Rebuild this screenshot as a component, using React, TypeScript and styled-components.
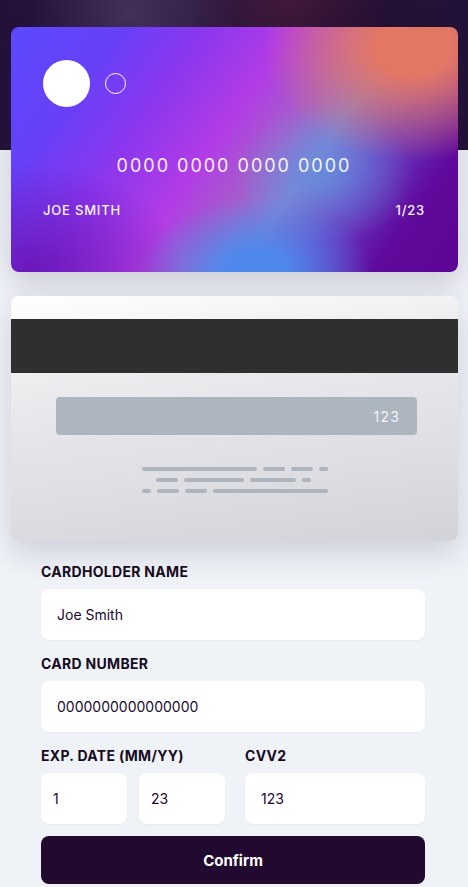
import styled, { createGlobalStyle } from "styled-components";

const GlobalStyle = createGlobalStyle`
  * { box-sizing: border-box; }
  html, body { margin: 0; padding: 0; }
  body {
    font-family: Inter, "Noto Sans", sans-serif;
    background: #eff2f7;
    color: #21092f;
  }
`;

const Page = styled.div`
  min-height: 887px;
  padding: 27px 10px 0 11px;
  background:
    radial-gradient(circle at 28% 10%, rgba(90, 70, 110, 0.55), transparent 28%),
    radial-gradient(circle at 62% 0%, rgba(90, 30, 60, 0.5), transparent 30%),
    linear-gradient(90deg, #24113a 0%, #2c1a40 40%, #251033 70%, #231238 100%),
    #eff2f7;
  background-size: 100% 150px, 100% 150px, 100% 150px, auto;
  background-repeat: no-repeat;
`;

const Cards = styled.div`
  display: flex;
  flex-direction: column;
  gap: 24px;
`;

const FrontCard = styled.div`
  height: 245px;
  border-radius: 8px;
  padding: 33px 33px 0 32px;
  color: #fff;
  display: flex;
  flex-direction: column;
  box-shadow: 0 12px 30px rgba(40, 30, 60, 0.18);
  background:
    radial-gradient(ellipse 150px 115px at 90% 8%, rgba(228, 118, 100, 1) 25%, rgba(228, 118, 100, 0) 100%),
    radial-gradient(ellipse 115px 75px at 55% 100%, rgba(78, 136, 236, 1) 25%, rgba(78, 136, 236, 0) 100%),
    radial-gradient(ellipse 90px 70px at 70% 60%, rgba(98, 146, 222, 0.8), rgba(98, 146, 222, 0) 100%),
    radial-gradient(ellipse 150px 110px at 5% 100%, rgba(100, 18, 178, 0.85), rgba(100, 18, 178, 0) 100%),
    linear-gradient(125deg, #5c49fd 0%, #6740f7 18%, #8c37ee 32%, #b23ce6 46%, #a65ccb 56%, #8480d2 64%, #6b3ec4 74%, #5f0a9c 86%, #5c0494 100%);
`;

const Logo = styled.div`
  display: flex;
  align-items: center;
  gap: 15px;
`;

const Dot = styled.span<{ $size: number; $filled?: boolean }>`
  width: ${(p) => p.$size}px;
  height: ${(p) => p.$size}px;
  border-radius: 50%;
  background: ${(p) => (p.$filled ? "#fff" : "transparent")};
  border: ${(p) => (p.$filled ? "none" : "1px solid #fff")};
`;

const CardNumber = styled.div`
  margin-top: 48px;
  text-align: center;
  font-size: 18px;
  letter-spacing: 2px;
  opacity: 0.92;
`;

const CardFooter = styled.div`
  margin-top: 26px;
  display: flex;
  justify-content: space-between;
  font-size: 13px;
  font-weight: 500;
  letter-spacing: 0.8px;
  opacity: 0.95;
`;

const BackCard = styled.div`
  height: 245px;
  border-radius: 8px;
  padding-top: 23px;
  overflow: hidden;
  box-shadow: 0 12px 30px rgba(40, 30, 60, 0.16);
  background: linear-gradient(172deg, #ffffff 0%, #ececef 30%, #dfdfe4 65%, #d2d3d8 100%);
`;

const Stripe = styled.div`
  height: 54px;
  background: #2f2f2f;
`;

const CvcBox = styled.div`
  margin: 24px 41px 0 45px;
  height: 38px;
  border-radius: 4px;
  background: #adb5bf;
  display: flex;
  align-items: center;
  justify-content: flex-end;
  padding-right: 17px;
  color: #f3f4f7;
  font-size: 14px;
  letter-spacing: 1.2px;
`;

const Dashes = styled.svg`
  display: block;
  margin: 32px auto 0;
`;

const Form = styled.form`
  width: 384px;
  margin: 21px 0 0 30px;
  display: flex;
  flex-direction: column;
`;

const Field = styled.div`
  display: flex;
  flex-direction: column;
  margin-bottom: 14px;
`;

const Label = styled.label`
  font-size: 14px;
  font-weight: 700;
  line-height: 20px;
  letter-spacing: 0.3px;
  text-transform: uppercase;
  color: #160b1f;
  margin-bottom: 7px;
  white-space: nowrap;
`;

const Input = styled.input<{ $pad?: number }>`
  height: 51px;
  width: 100%;
  border: none;
  border-radius: 8px;
  background: #fff;
  padding: 0 ${(p) => p.$pad ?? 16}px;
  font-family: Inter, "Noto Sans", sans-serif;
  font-size: 14px;
  color: #21092f;
  outline: none;
  box-shadow: 0 1px 2px rgba(30, 20, 50, 0.04);
`;

const Row = styled.div`
  display: grid;
  grid-template-columns: 184px 180px;
  column-gap: 20px;
`;

const Pair = styled.div`
  display: grid;
  grid-template-columns: 86px 86px;
  column-gap: 12px;
`;

const Button = styled.button`
  height: 48px;
  margin-top: -2px;
  border: none;
  border-radius: 8px;
  background: #21092f;
  color: #fff;
  font-family: Inter, "Noto Sans", sans-serif;
  font-size: 15px;
  font-weight: 700;
`;

const dashes: [number, number, number][] = [
  [143, 258, 470], [264, 286, 470], [292, 314, 470], [320, 329, 470],
  [157, 179, 481], [185, 245, 481], [251, 297, 481], [303, 312, 481],
  [143, 152, 492], [158, 180, 492], [186, 208, 492], [214, 329, 492],
];

export default function App() {
  return (
    <>
      <GlobalStyle />
      <Page>
        <Cards>
          <FrontCard>
            <Logo>
              <Dot $size={47} $filled />
              <Dot $size={21} />
            </Logo>
            <CardNumber>0000 0000 0000 0000</CardNumber>
            <CardFooter>
              <span>JOE SMITH</span>
              <span>1/23</span>
            </CardFooter>
          </FrontCard>
          <BackCard>
            <Stripe />
            <CvcBox>123</CvcBox>
            <Dashes width="190" height="26" viewBox="141 468 190 26">
              {dashes.map(([x1, x2, y], i) => (
                <line key={i} x1={x1 + 2} x2={x2 - 2} y1={y} y2={y} stroke="#adb5bf" strokeWidth="4" strokeLinecap="round" />
              ))}
            </Dashes>
          </BackCard>
        </Cards>
        <Form onSubmit={(e) => e.preventDefault()}>
          <Field>
            <Label>Cardholder Name</Label>
            <Input readOnly defaultValue="Joe Smith" />
          </Field>
          <Field>
            <Label>Card Number</Label>
            <Input readOnly defaultValue="0000000000000000" />
          </Field>
          <Row>
            <Field>
              <Label>Exp. Date (MM/YY)</Label>
              <Pair>
                <Input readOnly defaultValue="1" $pad={12} />
                <Input readOnly defaultValue="23" $pad={12} />
              </Pair>
            </Field>
            <Field>
              <Label>CVV2</Label>
              <Input readOnly defaultValue="123" />
            </Field>
          </Row>
          <Button type="submit">Confirm</Button>
        </Form>
      </Page>
    </>
  );
}
